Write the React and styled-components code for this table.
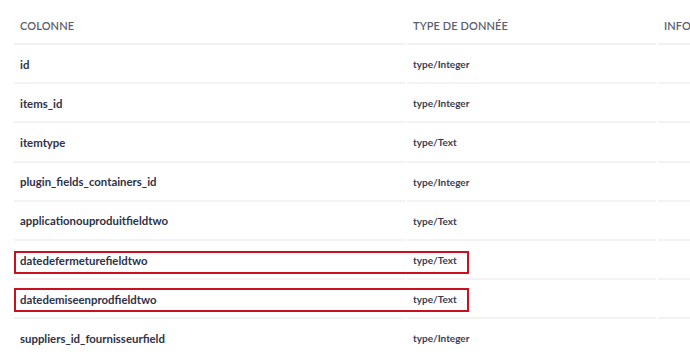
import React from "react";
import styled, { createGlobalStyle } from "styled-components";

const Global = createGlobalStyle`
  html, body { margin: 0; padding: 0; background: #ffffff; overflow: hidden; }
  body { font-family: Lato, "Noto Sans", sans-serif; }
`;

const Table = styled.div`
  padding-left: 14px;
  width: 880px;
`;

const Row = styled.div`
  position: relative;
  display: grid;
  grid-template-columns: 391px 249px 220px;
  column-gap: 2px;
  height: ${(p) => (p.$head ? "45px" : "39.2px")};
`;

const Cell = styled.div`
  display: flex;
  align-items: center;
  padding-left: 6px;
  border-bottom: 2px solid #f2f2f3;
  box-sizing: border-box;
  white-space: nowrap;
`;

const HeadCell = styled(Cell)`
  font-size: 11px;
  font-weight: 600;
  letter-spacing: 0.1px;
  text-transform: uppercase;
  color: #5b5f6e;
  align-items: flex-start;
  padding-top: 19px;
`;

const NameCell = styled(Cell)`
  font-size: 11.4px;
  font-weight: 700;
  color: #2f3246;
  padding-top: 1px;
`;

const TypeCell = styled(Cell)`
  font-size: 10px;
  font-weight: 700;
  color: #3a3d50;
  padding-top: 1px;
`;

const Highlight = styled.div`
  position: absolute;
  left: 0;
  top: ${(p) => p.$top}px;
  width: 455px;
  height: ${(p) => p.$h}px;
  border: 2px solid #c8101e;
  box-sizing: border-box;
  pointer-events: none;
`;

const rows = [
  ["id", "type/Integer"],
  ["items_id", "type/Integer"],
  ["itemtype", "type/Text"],
  ["plugin_fields_containers_id", "type/Integer"],
  ["applicationouproduitfieldtwo", "type/Text"],
  ["datedefermeturefieldtwo", "type/Text", { top: 10, h: 23 }],
  ["datedemiseenprodfieldtwo", "type/Text", { top: 8, h: 24 }],
  ["suppliers_id_fournisseurfield", "type/Integer"],
];

export default function App() {
  return (
    <>
      <Global />
      <Table>
        <Row $head>
          <HeadCell>Colonne</HeadCell>
          <HeadCell>Type de donnée</HeadCell>
          <HeadCell>Info</HeadCell>
        </Row>
        {rows.map(([name, type, hl]) => (
          <Row key={name}>
            <NameCell>{name}</NameCell>
            <TypeCell>{type}</TypeCell>
            <Cell />
            {hl && <Highlight $top={hl.top} $h={hl.h} />}
          </Row>
        ))}
      </Table>
    </>
  );
}
